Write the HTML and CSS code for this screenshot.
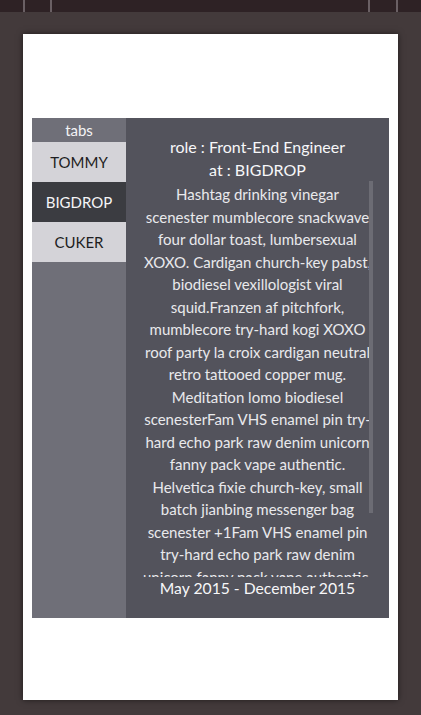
FILE: index.html
```html
<!DOCTYPE html>
<html lang="en">
<head>
<meta charset="utf-8">
<title>Tabs</title>
<link rel="stylesheet" href="styles.css">
</head>
<body>
<div class="topbar">
  <span class="tick t1"></span>
  <span class="tick t2"></span>
  <span class="spacer"></span>
  <span class="tick t3"></span>
  <span class="tick t4"></span>
</div>
<main class="stage">
  <section class="card">
    <div class="widget">
      <nav class="tabs">
        <div class="tabs-title">tabs</div>
        <button class="tab">TOMMY</button>
        <button class="tab active">BIGDROP</button>
        <button class="tab">CUKER</button>
      </nav>
      <article class="panel">
        <div class="role">role : Front-End Engineer</div>
        <div class="company">at : BIGDROP</div>
        <div class="scroll">
          <p class="desc">Hashtag drinking vinegar<br>scenester mumblecore snackwave four dollar toast, lumbersexual XOXO. Cardigan church-key pabst, biodiesel vexillologist viral squid.Franzen af pitchfork, mumblecore try-hard kogi XOXO roof party la croix cardigan neutral retro tattooed copper mug. Meditation lomo biodiesel scenesterFam VHS enamel pin try-hard echo park raw denim unicorn fanny pack vape authentic. Helvetica fixie church-key, small batch jianbing messenger bag scenester +1Fam VHS enamel pin try-hard echo park raw denim unicorn fanny pack vape authentic. Helvetica fixie church-key, small batch jianbing messenger bag scenester.</p>
          <span class="thumb"></span>
        </div>
        <div class="dates">May 2015 - December 2015</div>
      </article>
    </div>
  </section>
</main>
</body>
</html>
```
FILE: styles.css
```css
html, body {
  margin: 0;
  padding: 0;
  height: 100%;
}
body {
  background: #433a3b;
  font-family: Lato, "Liberation Sans", sans-serif;
  overflow: hidden;
}
.topbar {
  height: 12px;
  background: #2e2225;
  display: flex;
}
.tick {
  width: 2px;
  background: #6a6064;
}
.t1 { margin-left: 23px; }
.t2 { margin-left: 25px; }
.spacer { flex: 1; }
.t3 { margin-right: 26px; }
.t4 { margin-right: 23px; }
.stage {
  padding: 22px 23px 0 23px;
}
.card {
  background: #ffffff;
  height: 666px;
  box-shadow: 0 0 6px rgba(0, 0, 0, 0.55);
  padding: 84px 9px 0 9px;
  box-sizing: border-box;
}
.widget {
  display: flex;
  height: 500px;
}
.tabs {
  width: 94px;
  background: #6f6f78;
  display: flex;
  flex-direction: column;
}
.tabs-title {
  height: 24px;
  line-height: 24px;
  text-align: center;
  color: #f3f3f5;
  font-size: 15px;
}
.tab {
  height: 40px;
  border: 0;
  margin: 0;
  padding: 0;
  background: #d4d3d8;
  color: #1e1e22;
  font-family: inherit;
  font-size: 15px;
  text-align: center;
}
.tab.active {
  background: #3b3c41;
  color: #f5f5f7;
}
.panel {
  flex: 1;
  background: #53535c;
  color: #f7f7f9;
  display: flex;
  flex-direction: column;
  padding: 17px 0;
  box-sizing: border-box;
  text-align: center;
}
.role, .company, .dates {
  font-size: 16px;
  line-height: 23px;
}
.dates {
  font-size: 15.7px;
}
.scroll {
  position: relative;
  height: 396px;
  overflow: hidden;
  padding: 0 15px;
}
.desc {
  margin: 2px 0 0;
  font-size: 15px;
  line-height: 22.5px;
  color: #e9e9ec;
}
.thumb {
  position: absolute;
  left: 243px;
  top: 0;
  width: 4px;
  height: 332px;
  background: #6c6c74;
}
```
